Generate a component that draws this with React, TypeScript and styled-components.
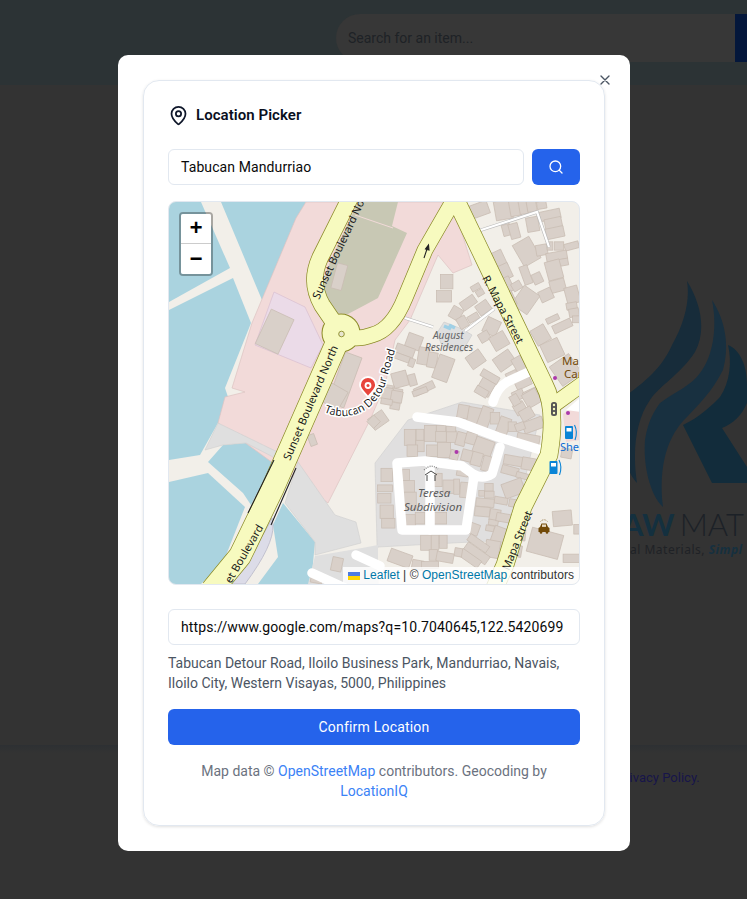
import React from "react";
import styled, { createGlobalStyle } from "styled-components";

const Global = createGlobalStyle`
  html, body { margin: 0; padding: 0; background: #323232; }
  * { box-sizing: border-box; }
  body { font-family: Roboto, "Liberation Sans", sans-serif; }
`;

const Page = styled.div`
  position: relative;
  width: 747px;
  height: 899px;
  overflow: hidden;
  background: #333333;
`;
const TopBar = styled.header`
  height: 85px;
  background: #2c3335;
  padding: 14px 0 0 336px;
  display: flex;
  align-items: flex-start;
`;
const BackSearch = styled.div`
  width: 399px;
  height: 48px;
  background: #373737;
  border-radius: 24px 0 0 24px;
  padding-left: 12px;
  display: flex;
  align-items: center;
  color: #1e2226;
  font-size: 14px;
`;
const BackSearchButton = styled.div`
  width: 12px;
  height: 48px;
  background: #04173b;
`;
const BackLogo = styled.svg`
  position: absolute;
  left: 620px;
  top: 260px;
  width: 127px;
  height: 250px;
`;
const BackBrand = styled.div`
  position: absolute;
  left: 630px;
  top: 511px;
  white-space: nowrap;
  font-family: Lato, sans-serif;
  font-size: 31px;
  line-height: 27px;
  color: #1c2127;
  font-weight: 300;
  b { color: #14303f; font-weight: 700; margin: 0 5px 0 -8px; }
`;
const BackTag = styled.div`
  position: absolute;
  left: 630px;
  top: 541px;
  white-space: nowrap;
  font-family: "Noto Sans", sans-serif;
  font-size: 12px;
  letter-spacing: 0.5px;
  color: #1f2226;
  b { color: #16303f; font-style: italic; font-weight: 700; }
`;
const BackPanelEdge = styled.div`
  position: absolute;
  left: 0;
  right: 0;
  top: 745px;
  height: 8px;
  background: linear-gradient(#2d3033, #333333);
`;
const BackLink = styled.a`
  position: absolute;
  left: 617px;
  top: 770px;
  font-size: 13px;
  color: #17154a;
`;

const Modal = styled.div`
  position: absolute;
  left: 118px;
  top: 55px;
  width: 512px;
  height: 796px;
  background: #fff;
  border-radius: 10px;
  padding: 25px;
`;
const Close = styled.button`
  position: absolute;
  right: 17px;
  top: 17px;
  width: 16px;
  height: 16px;
  padding: 0;
  border: 0;
  background: none;
  color: #4b5563;
  display: flex;
`;
const Card = styled.section`
  width: 462px;
  height: 746px;
  border: 1px solid #e2e8f0;
  border-radius: 16px;
  box-shadow: 0 1px 3px rgba(0, 0, 0, 0.12);
  padding: 24px;
  display: flex;
  flex-direction: column;
`;
const TitleRow = styled.div`
  display: flex;
  align-items: center;
  gap: 7px;
  height: 20px;
  margin-bottom: 24px;
  color: #0f172a;
`;
const Title = styled.h2`
  margin: 0;
  font-size: 15px;
  font-weight: 600;
  line-height: 18px;
  letter-spacing: 0.05px;
  color: #0a0f1e;
`;
const SearchRow = styled.div`
  display: flex;
  gap: 8px;
  margin-bottom: 16px;
`;
const Field = styled.div`
  flex: 1;
  height: 36px;
  border: 1px solid #e2e8f0;
  border-radius: 6px;
  padding: 0 12px;
  display: flex;
  align-items: center;
  font-size: 14px;
  letter-spacing: 0.1px;
  color: #0a0a0a;
  white-space: nowrap;
  overflow: hidden;
`;
const UrlField = styled(Field)`
  flex: none;
  letter-spacing: 0.12px;
`;
const IconButton = styled.button`
  width: 48px;
  height: 36px;
  border: 0;
  padding: 0;
  border-radius: 6px;
  background: #2563eb;
  color: #fff;
  display: flex;
  align-items: center;
  justify-content: center;
`;
const MapBox = styled.div`
  position: relative;
  height: 384px;
  border: 1px solid #e2e8f0;
  border-radius: 8px;
  overflow: hidden;
  margin-bottom: 24px;
  background: #f2efe9;
`;
const MapArt = styled.svg`
  display: block;
  width: 410px;
  height: 382px;
`;
const Zoom = styled.div`
  position: absolute;
  left: 10px;
  top: 10px;
  width: 34px;
  border: 2px solid rgba(0, 0, 0, 0.3);
  border-radius: 4px;
  background-clip: padding-box;
`;
const ZoomBtn = styled.div<{ $top?: boolean }>`
  width: 30px;
  height: 30px;
  padding-top: 3px;
  background: #fff;
  display: flex;
  align-items: center;
  justify-content: center;
  border-bottom: ${(p) => (p.$top ? "1px solid #ccc" : "0")};
  border-radius: ${(p) => (p.$top ? "2px 2px 0 0" : "0 0 2px 2px")};
  font: bold 22px/30px "Liberation Mono", monospace;
  color: #000;
`;
const Attribution = styled.div`
  position: absolute;
  right: 0;
  bottom: 0;
  height: 17px;
  padding: 0 5px;
  background: rgba(255, 255, 255, 0.8);
  font: 12px/17px "Liberation Sans", Arial, sans-serif;
  letter-spacing: 0.05px;
  color: #333;
  white-space: nowrap;
  display: flex;
  align-items: center;
  a { color: #0078a8; text-decoration: none; }
  svg { margin-right: 3px; }
`;
const Address = styled.p`
  margin: 8px 0 16px;
  font-size: 14px;
  line-height: 20px;
  color: #4b5563;
`;
const Confirm = styled.button`
  height: 36px;
  width: 100%;
  border: 0;
  border-radius: 6px;
  background: #2563eb;
  color: #fff;
  font: 400 14px Roboto, sans-serif;
  letter-spacing: 0.2px;
`;
const Note = styled.p`
  margin: 16px 0 0;
  text-align: center;
  font-size: 14px;
  line-height: 20px;
  color: #6b7280;
  a { color: #3b82f6; text-decoration: none; }
`;

type B = [number, number, number, number, number];

const z3: B[] = [
  [310,30,55,35,-20],[385,30,45,50,-10],[420,25,28,40,-10],[445,22,22,35,-10],[470,18,25,30,-10],[500,15,25,20,-10],
  [525,45,55,25,-12],[535,70,45,28,-12],[540,98,48,28,-12],[395,90,22,30,-15],[418,93,25,40,-15],[473,73,32,38,-10],
  [455,155,50,65,-30],[500,150,30,28,-10],[525,138,15,22,0],[552,138,25,22,0],[590,138,38,18,-15],[545,168,55,22,-10],
  [558,188,38,18,-10],[537,210,40,50,-15],[372,178,30,45,-25],[390,215,30,40,-25],[395,255,28,40,-25],[425,258,25,22,-30],
  [453,225,22,50,-20],[487,235,25,28,-25],[548,257,40,32,-15],[513,285,35,30,-25],[452,300,50,60,35],[408,295,18,40,-25],
  [592,285,35,45,-15],[590,318,28,18,-10],[597,338,26,22,-10],[603,358,18,18,0],[533,357,35,15,-25],[562,378,52,22,-25],
  [497,405,40,45,-30],[532,450,50,50,-25],[215,245,33,38,0],[207,289,40,30,0],[302,262,25,15,-30],[315,278,20,16,-30],
  [280,308,42,25,-35],[243,340,30,32,30],[263,367,25,30,-30],[295,353,30,18,-30],[325,323,35,30,-35],[350,380,38,42,25],
  [328,410,28,25,-30],[373,423,42,40,-30],[302,478,42,38,-35],[117,425,40,38,20],[90,452,50,25,20],[82,473,40,16,20],
  [110,488,15,22,20],[145,468,28,45,10],[172,480,25,40,10],[205,505,42,65,20],[75,538,40,40,-15],[112,540,20,30,-15],
  [148,565,55,20,-25],[37,575,32,35,10],[65,583,28,30,10],[345,530,50,20,30],[332,562,38,40,30],[388,482,50,40,-35],
  [432,492,28,38,-30],[410,525,30,18,-25],[445,550,42,22,-25],[430,585,30,25,-25],[470,585,40,30,-25],[572,510,62,62,-35],
];

const z5: B[] = [
  [35,10,32,30,10],[65,20,30,30,10],[60,48,25,18,10],[35,35,30,15,10],[10,90,45,35,-35],[135,5,40,15,-20],[320,5,35,20,30],
  [265,65,30,35,10],[298,78,35,45,10],[330,82,30,55,20],[360,85,25,30,0],[385,110,30,50,20],[412,110,22,25,0],[435,55,30,30,-30],
  [420,30,22,28,-30],[470,25,40,40,-30],[455,72,35,30,-30],[475,105,55,30,-20],[435,110,25,20,-20],[460,147,60,25,10],
  [105,142,30,42,0],[135,135,20,30,0],[135,168,22,30,0],[167,130,32,42,0],[198,117,25,18,0],[198,140,28,28,0],[230,140,28,30,0],
  [228,117,25,15,0],[112,182,28,30,0],[172,182,30,30,0],[207,180,35,40,0],[258,147,25,35,15],[288,145,28,30,15],[325,172,50,45,20],
  [238,195,22,25,15],[277,197,30,30,15],[305,207,28,35,15],[340,222,32,40,15],[35,255,30,35,0],[30,295,40,18,0],[28,325,35,25,0],
  [35,365,35,35,0],[40,400,35,25,0],[93,255,18,30,0],[100,290,32,32,0],[105,332,33,45,0],[105,390,30,28,0],[190,270,20,35,0],
  [222,290,32,35,0],[245,290,15,40,0],[262,250,30,15,10],[268,300,22,40,5],[195,385,35,30,0],[135,385,25,30,0],[415,212,50,25,10],
  [462,222,38,32,10],[405,242,45,22,15],[445,258,38,15,15],[415,295,55,40,-20],[342,292,22,20,0],[320,310,15,15,0],[343,314,25,18,0],
  [378,332,35,18,10],[418,340,28,20,10],[450,350,25,18,10],[330,338,48,22,5],[322,365,40,25,5],[360,375,28,30,10],[355,398,25,15,10],
  [395,385,55,22,10],[345,415,22,15,10],[295,417,30,30,20],[378,445,50,55,20],[440,435,20,30,5],[420,482,35,30,10],[352,477,38,45,10],
  [310,460,60,20,35],[305,490,70,25,35],[285,505,60,22,35],[250,487,20,22,10],[153,458,28,40,0],[180,458,20,40,0],[205,455,20,35,0],
  [175,495,22,28,0],[210,502,45,25,10],[128,525,30,25,10],[75,505,60,35,20],[165,525,45,18,0],[562,385,50,40,-5],[510,460,85,65,15],
  [590,505,45,22,0],[605,418,15,25,0],[575,190,28,25,10],
];

const z2: B[] = [[514,230,28,68,15],[320,395,66,100,25],[530,540,46,140,20]];
const z4: B[] = [[500,20,55,50,-60],[433,150,18,30,-20],[617,95,25,25,-45],[507,523,28,36,12],[445,570,30,16,10]];

const Buildings = ({ items, x, y, grow = 1.14 }: { items: B[]; x: number; y: number; grow?: number }) => (
  <g transform={`translate(${x} ${y}) scale(0.3333)`}>
    {items.map(([cx, cy, w0, h0, r], i) => {
      const w = w0 * grow;
      const h = h0 * grow;
      return (
        <rect
          key={i}
          x={cx - w / 2}
          y={cy - h / 2}
          width={w}
          height={h}
          transform={`rotate(${r} ${cx} ${cy})`}
          fill="#d9d0c9"
          stroke="#c9bdb3"
          strokeWidth={2.2}
        />
      );
    })}
  </g>
);

const Road = ({ d, w }: { d: string; w: number }) => (
  <path d={d} fill="none" stroke="#8a8a25" strokeWidth={w + 1.4} strokeLinecap="butt" strokeLinejoin="round" />
);
const RoadFill = ({ d, w }: { d: string; w: number }) => (
  <path d={d} fill="none" stroke="#f7fabf" strokeWidth={w} strokeLinecap="round" strokeLinejoin="round" />
);

const sunsetTop = "M350,198 L320,258 Q309,282 322,305 L341,333";
const sunsetLow = "M341,333 L272,490 L240,556 L212,590";
const loop = "M341,333 Q352,342 372,335 Q392,330 405,298 L425,250 L455,198";
const mapa = "M455,198 L480,250 L544,384 Q557,408 549,455 L523,507 L505,565 L493,592";
const wedge = "M552,406 L588,380";

const Label = styled.text<{ $size?: number; $color?: string }>`
  font-family: "Noto Sans", "Open Sans", sans-serif;
  font-size: ${(p) => p.$size ?? 10.5}px;
  fill: ${(p) => p.$color ?? "#1a1a1a"};
  paint-order: stroke;
  stroke-linejoin: round;
`;

const CityMap = () => (
  <MapArt viewBox="169 202 410 382">
    <defs>
      <path id="detour" d="M324,412 C350,423 375,411 385,385 L398,340" />
    </defs>
    <g fill="#aad3df">
      <polygon points="221,202 306,202 296,220 262,300" />
      <polygon points="169,202 201,202 230,268 169,302" />
      <polygon points="169,310 233,278 251,323 225,388 230,403 218,423 200,455 169,460" />
      <polygon points="169,482 208,473 245,507 223,563 201,584 169,584" />
      <polygon points="208,462 223,445 246,443 275,458 251,505 243,493" />
      <polygon points="283,503 315,542 311,584 258,584 278,557 273,525" />
    </g>
    <polygon points="306,202 452,202 472,265 453,273 438,255 410,320 395,340 385,385 370,420 328,503 218,423 225,397 245,392 232,388 252,323 296,218" fill="#f2dad9" stroke="#dcc3c2" strokeWidth="0.7" />
    <polygon points="274,292 305,307 323,345 311,368 255,345" fill="#ebdbe8" stroke="#d8bfd0" strokeWidth="0.7" />
    <polygon points="358,202 398,202 392,226 407,233 378,298 365,305 348,314 330,313 323,283 330,262" fill="#c8c8b4" />
    <line x1="355" y1="215" x2="393" y2="228" stroke="#f2dad9" strokeWidth="1" />
    <polygon points="218,423 205,450 223,445 246,443 275,458 298,462 335,515 356,522 361,543 315,555 315,542 285,503 298,462 218,423" fill="#dfdfdf" stroke="#cfcfcf" strokeWidth="0.6" />
    <polygon points="375,463 408,420 462,402 540,415 520,500 508,540 378,547 375,555 315,584 378,584 375,463" fill="#e0dfdf" stroke="#cfcfcf" strokeWidth="0.6" />
    <polygon points="362,548 378,545 378,584 308,584 315,556" fill="#dfdfdf" />
    <polygon points="563,414 581,400 581,440 566,442" fill="#f2dad9" />
    <polygon points="566,410 581,397 581,412" fill="#fff" />
    <polygon points="437,333 444,322 462,329 472,335 462,352 442,346" fill="#dfdfdf" stroke="#c9c9c9" strokeWidth="0.6" />
    <path d="M444,326 L451,329 M449,325 L455,328" stroke="#9fd0e6" strokeWidth="3.5" />

    <Buildings items={z3} x={375} y={200} />
    <Buildings items={z5} x={375} y={390} />
    <Buildings items={z2} x={168} y={200} />
    <Buildings items={z4} x={168} y={390} />

    <g fill="none" stroke="#b9b9b9" strokeWidth="3.4">
      <path d="M475,232 L537,212 L549,247" />
      <path d="M405,318 L433,327 M465,331 L494,309" />
    </g>
    <g fill="none" stroke="#fff" strokeWidth="2.2">
      <path d="M475,232 L537,212 L549,247" />
      <path d="M405,318 L433,327 M465,331 L494,309" />
    </g>
    <g fill="none" stroke="#fff" strokeWidth="9.5" strokeLinecap="round" strokeLinejoin="round">
      <path d="M493,402 Q497,388 507,382 L535,369" />
      <path d="M417,417 L458,422 L498,437 L541,450" />
      <path d="M500,447 L492,474 Q482,480 473,474 L462,466 L425,461 L397,463 L402,530 L466,530 L474,476" />
      <path d="M430,463 L430,530" />
      <path d="M356,555 L380,566" />
      <path d="M312,573 L345,588" />
    </g>
    <path d="M273,525 Q274,545 245,584 L228,584 Q262,540 272,518 Z" fill="#dcdce8" stroke="#b8b8c8" strokeWidth="0.8" />

    <Road d={sunsetTop} w={16} />
    <Road d={sunsetLow} w={22} />
    <Road d={loop} w={15} />
    <Road d={mapa} w={17} />
    <Road d={wedge} w={15} />
    <circle cx="341" cy="333" r="19.5" fill="#8a8a25" />
    <RoadFill d={sunsetTop} w={16} />
    <RoadFill d={sunsetLow} w={22} />
    <RoadFill d={loop} w={15} />
    <RoadFill d={mapa} w={17} />
    <RoadFill d={wedge} w={15} />
    <circle cx="341" cy="333" r="18.5" fill="#f7fabf" />
    <circle cx="341.5" cy="334" r="2.8" fill="#e8e5d0" stroke="#8a8a25" strokeWidth="0.9" />
    <path d="M274,460 L248,513 M296,468 L271,525" stroke="#222" strokeWidth="1.1" fill="none" />
    <path d="M424,258 L428,246 M425.5,249 L429,250 L428.5,245 Z" stroke="#222" strokeWidth="1.1" fill="#222" />

    <Label transform="translate(319,300) rotate(-65)" $size={11}>Sunset Boulevard No</Label>
    <Label transform="translate(290,461) rotate(-67)" $size={11}>Sunset Boulevard North</Label>
    <Label transform="translate(231,584) rotate(-60)" $size={11}>et Boulevard</Label>
    <Label transform="translate(482,278) rotate(62)" $size={11}>R. Mapa Street</Label>
    <Label transform="translate(509,571) rotate(-68)" $size={11}>Mapa Street</Label>
    <Label $size={11} stroke="#fff" strokeWidth="3">
      <textPath href="#detour">Tabucan Detour Road</textPath>
    </Label>
    <Label x="433" y="339" $size={10} $color="#666" fontStyle="italic">August</Label>
    <Label x="425" y="351" $size={10} $color="#666" fontStyle="italic">Residences</Label>
    <Label x="418" y="497" $size={11.5} $color="#5c5c5c" fontStyle="italic">Teresa</Label>
    <Label x="404" y="511" $size={11.5} $color="#5c5c5c" fontStyle="italic">Subdivision</Label>
    <Label x="562" y="365" $size={11.5} $color="#734a08">Mar</Label>
    <Label x="564" y="378" $size={11.5} $color="#734a08">Car</Label>
    <Label x="560" y="451" $size={11} $color="#0a6cd6">Shel</Label>

    <circle cx="555" cy="378" r="2" fill="#ac39ac" />
    <circle cx="456.5" cy="452" r="2" fill="#ac39ac" />
    <circle cx="568" cy="413" r="2" fill="#ac39ac" />
    <g>
      <rect x="551" y="402" width="6" height="14" rx="2.5" fill="#555" />
      <circle cx="554" cy="405" r="1.2" fill="#f7fabf" />
      <circle cx="554" cy="409" r="1.2" fill="#f7fabf" />
      <circle cx="554" cy="413" r="1.2" fill="#f7fabf" />
    </g>
    <g fill="#0a84d6">
      <rect x="565" y="426" width="8" height="13" rx="1" />
      <path d="M574.5,425 Q578,432 575,440" fill="none" stroke="#0a84d6" strokeWidth="1.1" />
      <rect x="549.5" y="461" width="8" height="13" rx="1" />
      <path d="M559,460 Q562.5,467 559.5,475" fill="none" stroke="#0a84d6" strokeWidth="1.1" />
    </g>
    <rect x="566.5" y="428" width="5" height="3.5" fill="#fff" />
    <rect x="551" y="463" width="5" height="3.5" fill="#fff" />
    <g>
      <path d="M540,527 L541.5,523.5 L546.5,523.5 L548,527 L549.5,528 L549.5,532 L538.5,532 L538.5,528 Z" fill="#734a08" />
      <rect x="542" y="524.5" width="4" height="2.4" fill="#e8d9c0" />
      <circle cx="541" cy="532.5" r="1.3" fill="#734a08" />
      <circle cx="547" cy="532.5" r="1.3" fill="#734a08" />
      <path d="M540.5,521.5 Q544,518 547.5,521.5" fill="none" stroke="#8c6a35" strokeWidth="0.8" strokeDasharray="1 0.8" />
    </g>
    <g fill="none" stroke="#333" strokeWidth="0.9">
      <path d="M425,475 L431,471 L437,475 M427,475 L427,481 M435,475 L435,481" />
    </g>
    <path d="M424,470 Q431,463 438,469" stroke="#888" strokeWidth="1.4" strokeDasharray="1 1.2" fill="none" />

    <path d="M368,397 C363,391 360,389 360,385 A8,8 0 0 1 376,385 C376,389 373,391 368,397 Z" fill="#e8453c" stroke="#fff" strokeWidth="1.8" />
    <circle cx="368" cy="385.5" r="3.4" fill="#fff" />
    <circle cx="368" cy="385.5" r="1.5" fill="#e8453c" />
  </MapArt>
);

export default function App() {
  return (
    <Page>
      <Global />
      <TopBar>
        <BackSearch>Search for an item...</BackSearch>
        <BackSearchButton />
      </TopBar>
      <BackLogo viewBox="620 260 127 250">
        <path d="M687,281 C702,305 706,332 695,352 C680,375 660,385 650,400 C636,420 632,450 637,483 C625,470 618,440 620,400 C640,385 660,372 672,345 C685,322 690,300 687,281 Z" fill="#172c3a" />
        <path d="M712,300 C725,320 730,345 723,370 C712,392 698,405 687,417 C668,435 658,465 663,507 C650,495 643,465 645,440 C648,420 655,410 660,403 C675,392 692,385 700,373 C712,358 718,330 712,300 Z" fill="#183040" />
        <path d="M728,345 C740,350 747,365 747,385 L747,403 C742,415 733,424 722,428 L747,467 L747,483 L712,483 L683,425 C700,417 712,405 720,397 C730,382 732,362 728,345 Z" fill="#122c3b" />
      </BackLogo>
      <BackBrand>
        <b>AW</b>MAT
      </BackBrand>
      <BackTag>
        al Materials, <b>Simpl</b>
      </BackTag>
      <BackPanelEdge />
      <BackLink>Privacy Policy.</BackLink>

      <Modal>
        <Close aria-label="Close">
          <svg width="16" height="16" viewBox="0 0 24 24" fill="none" stroke="currentColor" strokeWidth="2" strokeLinecap="round">
            <path d="M18 6 6 18M6 6l12 12" />
          </svg>
        </Close>
        <Card>
          <TitleRow>
            <svg width="21" height="21" viewBox="0 0 24 24" fill="none" stroke="currentColor" strokeWidth="2" strokeLinecap="round" strokeLinejoin="round">
              <path d="M20 10c0 5-5.5 10.2-7.4 11.8a1 1 0 0 1-1.2 0C9.5 20.2 4 15 4 10a8 8 0 0 1 16 0" />
              <circle cx="12" cy="10" r="3" />
            </svg>
            <Title>Location Picker</Title>
          </TitleRow>
          <SearchRow>
            <Field>Tabucan Mandurriao</Field>
            <IconButton aria-label="Search">
              <svg width="16" height="16" viewBox="0 0 24 24" fill="none" stroke="currentColor" strokeWidth="2" strokeLinecap="round">
                <circle cx="11" cy="11" r="8" />
                <path d="m21 21-4.3-4.3" />
              </svg>
            </IconButton>
          </SearchRow>
          <MapBox>
            <CityMap />
            <Zoom>
              <ZoomBtn $top>+</ZoomBtn>
              <ZoomBtn>−</ZoomBtn>
            </Zoom>
            <Attribution>
              <svg width="12" height="8" viewBox="0 0 12 8">
                <rect width="12" height="4" fill="#4c7be1" />
                <rect y="4" width="12" height="4" fill="#ffd500" />
              </svg>
              <a>Leaflet</a>&nbsp;|&nbsp;©&nbsp;<a>OpenStreetMap</a>&nbsp;contributors
            </Attribution>
          </MapBox>
          <UrlField>https://www.google.com/maps?q=10.7040645,122.5420699</UrlField>
          <Address>Tabucan Detour Road, Iloilo Business Park, Mandurriao, Navais, Iloilo City, Western Visayas, 5000, Philippines</Address>
          <Confirm>Confirm Location</Confirm>
          <Note>
            Map data © <a>OpenStreetMap</a> contributors. Geocoding by <a>LocationIQ</a>
          </Note>
        </Card>
      </Modal>
    </Page>
  );
}
